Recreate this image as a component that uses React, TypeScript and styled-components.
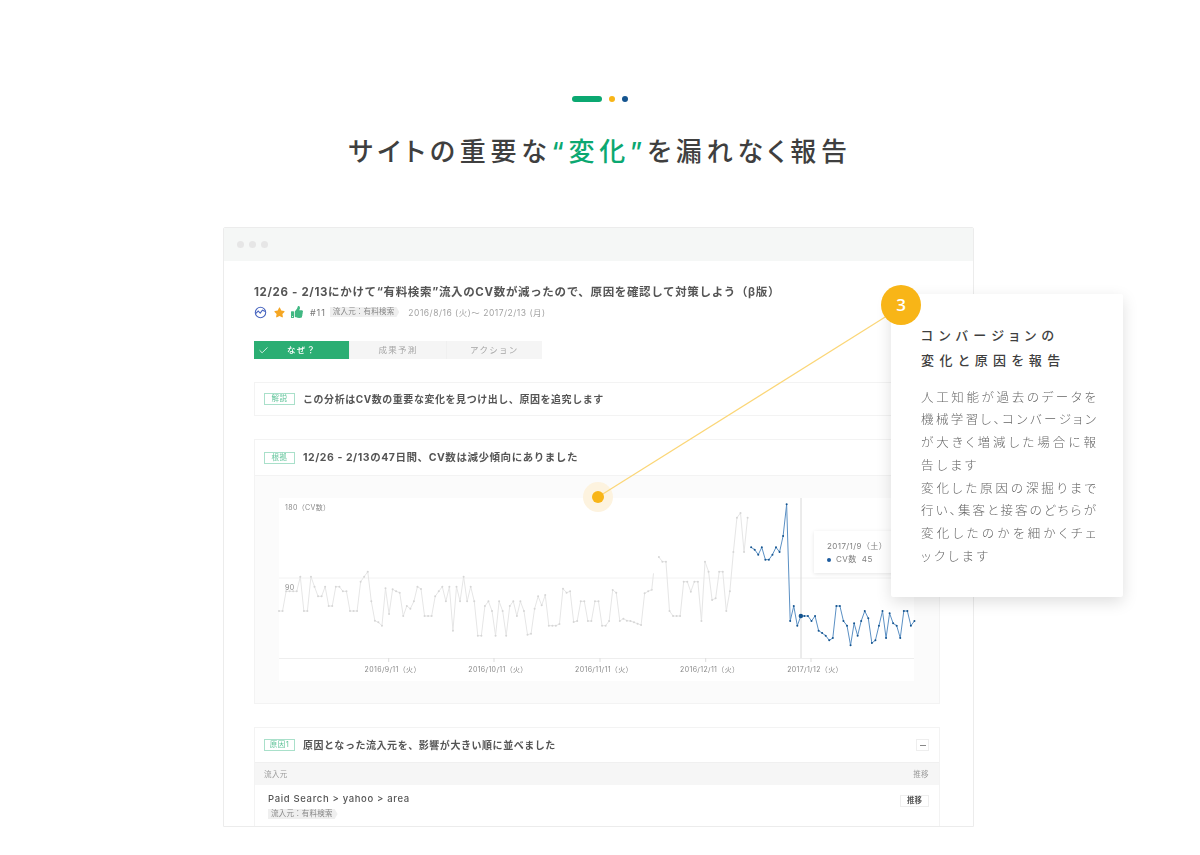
import React from 'react'
import styled, { createGlobalStyle } from 'styled-components'
import { FaStar, FaThumbsUp } from 'react-icons/fa'
import { Check } from 'lucide-react'

const GlobalStyle = createGlobalStyle`
  html, body { margin: 0; padding: 0; background: #fff; }
  body {
    font-family: Inter, "Noto Sans CJK JP", "Noto Sans", sans-serif;
    color: #444;
  }
`

const Stage = styled.div`
  position: relative;
  width: 1200px;
  height: 855px;
  padding-top: 96px;
  box-sizing: border-box;
  overflow: hidden;
`
const Marks = styled.div`
  display: flex;
  justify-content: center;
  align-items: center;
  gap: 7px;
  height: 6px;
`
const Dash = styled.span`
  width: 30px;
  height: 6px;
  border-radius: 3px;
  background: #0ba871;
`
const Dot = styled.span<{ $color: string }>`
  width: 6px;
  height: 6px;
  border-radius: 50%;
  background: ${(p) => p.$color};
`
const Title = styled.h1`
  margin: 31px 0 0;
  font-size: 26px;
  line-height: 38px;
  font-weight: 500;
  font-feature-settings: "palt";
  letter-spacing: 4.75px;
  text-align: center;
  color: #3f3f3f;
  em { font-style: normal; color: #0ba871; }
`
const Window = styled.div`
  box-sizing: border-box;
  width: 751px;
  height: 600px;
  margin: 56px 0 0 223px;
  border: 1px solid #ececec;
  border-radius: 2px 2px 0 0;
  overflow: hidden;
  background: #fff;
  filter: blur(0.25px);
`
const WindowBar = styled.div`
  display: flex;
  align-items: center;
  gap: 5px;
  height: 33px;
  padding-left: 13px;
  background: #f5f7f6;
`
const WindowDot = styled.span`
  width: 7px;
  height: 7px;
  border-radius: 50%;
  background: #e6e6e6;
`
const Content = styled.div`
  width: 686px;
  margin-left: 30px;
`
const Heading = styled.h2`
  margin: 23px 0 0;
  font-size: 11.5px;
  line-height: 16px;
  font-weight: 700;
  letter-spacing: 0.65px;
  color: #555;
  white-space: nowrap;
`
const Meta = styled.div`
  display: flex;
  align-items: center;
  height: 12px;
  margin-top: 6px;
  white-space: nowrap;
`
const MetaIcon = styled.span<{ $color: string; $width: number }>`
  display: flex;
  width: ${(p) => p.$width}px;
  color: ${(p) => p.$color};
`
const IssueNo = styled.span`
  margin: 0 4px 0 7px;
  font-size: 9px;
  letter-spacing: 0.9px;
  color: #777;
`
const SourceTag = styled.span`
  display: block;
  width: fit-content;
  height: 10px;
  padding: 0 5px 0 3px;
  font-size: 7.5px;
  line-height: 10px;
  letter-spacing: 0.2px;
  color: #888;
  background: #efefef;
  clip-path: polygon(0 0, calc(100% - 3px) 0, 100% 50%, calc(100% - 3px) 100%, 0 100%);
  white-space: nowrap;
`
const Period = styled.span`
  margin-left: 9px;
  font-size: 8.5px;
  letter-spacing: 0.5px;
  color: #a3a3a3;
`
const Tabs = styled.div`
  display: flex;
  margin-top: 23px;
  width: 288px;
`
const Tab = styled.div<{ $active?: boolean }>`
  position: relative;
  flex: 1;
  height: 18px;
  font-size: 8.5px;
  line-height: 18px;
  font-weight: ${(p) => (p.$active ? 500 : 400)};
  letter-spacing: 1.3px;
  text-align: center;
  color: ${(p) => (p.$active ? '#fff' : '#a5a5a5')};
  background: ${(p) => (p.$active ? '#2bae73' : '#f5f5f5')};
  & + & { border-left: 1px solid #f0f0f0; }
  svg { position: absolute; left: 4px; top: 3.5px; }
`
const Panel = styled.section`
  box-sizing: border-box;
  margin-top: 23px;
  border: 1px solid #f3f3f3;
`
const PanelHead = styled.div<{ $height: number }>`
  box-sizing: border-box;
  display: flex;
  align-items: center;
  height: ${(p) => p.$height}px;
  padding: 0 9px;
`
const Label = styled.span`
  box-sizing: border-box;
  width: 31px;
  height: 12px;
  margin-right: 8px;
  border: 1px solid #a9e0ca;
  font-size: 7.5px;
  line-height: 10px;
  letter-spacing: 0.4px;
  text-align: center;
  color: #64c59c;
`
const PanelTitle = styled.span<{ $size?: number }>`
  margin-top: -2px;
  font-size: ${(p) => p.$size || 10}px;
  font-weight: 700;
  letter-spacing: 0.55px;
  color: #555;
  white-space: nowrap;
`
const MinusButton = styled.span`
  box-sizing: border-box;
  display: flex;
  align-items: center;
  justify-content: center;
  width: 13px;
  height: 12px;
  margin: 0 1px 0 auto;
  border: 1px solid #eee;
  &::before { content: ''; width: 6px; height: 1px; background: #888; }
`
const ChartArea = styled.div`
  padding: 22px 25px 22px 24px;
  border-top: 1px solid #f3f3f3;
  background: #fbfbfb;
`
const ChartBox = styled.div`
  position: relative;
  width: 635px;
  height: 183px;
  background: #fff;
  svg { display: block; overflow: visible; }
  text {
    font-family: Inter, "Noto Sans CJK JP", sans-serif;
    font-size: 7px;
    letter-spacing: 0.35px;
    fill: #888;
  }
`
const Tooltip = styled.div`
  position: absolute;
  left: 535px;
  top: 33px;
  width: 100px;
  height: 42px;
  padding: 9px 0 0 13px;
  box-sizing: border-box;
  background: #fff;
  box-shadow: 0 1px 4px rgba(0, 0, 0, 0.1);
  font-size: 8px;
  line-height: 13px;
  letter-spacing: 0.4px;
  color: #808080;
  white-space: nowrap;
`
const TooltipValue = styled.div`
  display: flex;
  align-items: center;
  gap: 5px;
  &::before {
    content: '';
    width: 4px;
    height: 4px;
    border-radius: 50%;
    background: #1d5c9f;
  }
`
const TableHead = styled.div`
  box-sizing: border-box;
  display: flex;
  justify-content: space-between;
  align-items: center;
  height: 23px;
  padding: 0 10px 2px 9px;
  font-size: 7.5px;
  letter-spacing: 0.4px;
  color: #999;
  background: #f6f6f6;
  border-top: 1px solid #f0f0f0;
`
const TableRow = styled.div`
  display: flex;
  justify-content: space-between;
  padding: 8px 10px 30px 13px;
`
const RowName = styled.div`
  font-size: 9.5px;
  line-height: 12px;
  letter-spacing: 0.65px;
  font-weight: 500;
  color: #555;
  margin-bottom: 4px;
`
const TrendButton = styled.span`
  box-sizing: border-box;
  width: 29px;
  height: 12px;
  margin-top: 2px;
  border: 1px solid #eee;
  font-size: 7.5px;
  line-height: 10px;
  font-weight: 700;
  text-align: center;
  color: #555;
`
const Connector = styled.svg`
  position: absolute;
  left: 0;
  top: 0;
  pointer-events: none;
`
const Callout = styled.aside`
  position: absolute;
  left: 891px;
  top: 294px;
  box-sizing: border-box;
  width: 232px;
  height: 303px;
  padding: 29px 0 0 30px;
  border-radius: 2px;
  background: #fff;
  box-shadow: 0 5px 16px rgba(0, 0, 0, 0.13);
  font-feature-settings: "palt";
`
const CalloutTitle = styled.h3`
  margin: 0;
  font-size: 13px;
  line-height: 24.5px;
  font-weight: 500;
  letter-spacing: 5.4px;
  color: #3f3f3f;
  white-space: nowrap;
`
const CalloutBody = styled.div`
  margin-top: 14.5px;
  font-size: 12.5px;
  line-height: 22.75px;
  font-weight: 300;
  color: #666;
  white-space: nowrap;
  filter: blur(0.2px);
`
const BodyLine = styled.span<{ $short?: boolean }>`
  display: block;
  width: 177px;
  letter-spacing: ${(p) => (p.$short ? 3.1 : 2)}px;
  white-space: normal;
  text-align: justify;
  text-align-last: ${(p) => (p.$short ? 'left' : 'justify')};
`
const Badge = styled.div`
  position: absolute;
  left: 881px;
  top: 285px;
  width: 40px;
  height: 40px;
  border-radius: 50%;
  background: #f8b517;
  font-family: "Open Sans", sans-serif;
  font-size: 17px;
  font-weight: 600;
  line-height: 40px;
  text-align: center;
  color: #fff;
`

// y values read off the screenshot, x is one point per day
const toY = (z: number) => z / 3 - 18
const STEP = 3.55

const grayA = [
  393, 393, 334, 334, 334, 334, 290, 393, 393, 290, 320, 349, 349, 320, 378, 378, 320, 320, 334, 334,
  393, 393, 393, 305, 290, 275, 364, 422, 427, 437, 325, 402, 328, 334, 338, 408, 378, 386, 364, 320,
  327, 408, 408, 408, 349, 334, 320, 364, 320, 452, 320, 364, 290, 364, 320, 364, 467, 467, 378, 364,
  393, 467, 364, 393, 467, 378, 364, 408, 364, 393, 464, 461, 386, 349, 376, 345, 437, 437, 437, 432,
  326, 338, 334, 426, 423, 364, 364, 423, 423, 364, 364, 437, 437, 423, 330, 338, 423, 416, 422, 423,
  427, 431, 435, 340, 334, 329,
]
const grayB = [
  231, 245, 245, 393, 408, 408, 408, 305, 305, 335, 305, 305, 423, 245, 275, 360, 355, 275, 275, 393,
  334, 216, 113, 99, 216, 113,
]
const blue = [
  202, 209, 224, 202, 239, 239, 224, 202, 216, 168, 73, 423, 378, 437, 408, 408, 408, 423, 408, 452,
  459, 467, 481, 474, 378, 378, 423, 437, 496, 430, 467, 423, 393, 415, 489, 481, 437, 393, 474, 400,
  430, 437, 474, 393, 393, 437, 423,
]
const ticks = [
  { x: 109.7, label: '2016/9/11（火）' },
  { x: 215, label: '2016/10/11（火）' },
  { x: 321, label: '2016/11/11（火）' },
  { x: 426.7, label: '2016/12/11（火）' },
  { x: 532, label: '2017/1/12（火）' },
]

const Series = ({ start, values, line, dot }: any) => {
  const pts = values.map((v: number, i: number) => [(start + i) * STEP, toY(v)])
  return (
    <g>
      <polyline
        points={pts.map((p: number[]) => p.join(',')).join(' ')}
        fill="none"
        stroke={line}
        strokeWidth="1"
      />
      {pts.map((p: number[], i: number) => (
        <circle key={i} cx={p[0]} cy={p[1]} r="1" fill={dot} />
      ))}
    </g>
  )
}

const Chart = () => (
  <ChartBox>
    <svg width="635" height="183" viewBox="0 0 635 183">
      <line x1="0" y1="80" x2="635" y2="80" stroke="#f2f2f2" />
      <line x1="0" y1="160.5" x2="635" y2="160.5" stroke="#eeeeee" />
      {ticks.map((t) => (
        <g key={t.x}>
          <line x1={t.x} y1="160" x2={t.x} y2="164" stroke="#dddddd" />
          <text x={t.x + 4} y="173.5" textAnchor="middle">{t.label}</text>
        </g>
      ))}
      <text x="6" y="11.5">180（CV数）</text>
      <text x="6" y="91.5">90</text>
      <line x1="522" y1="0" x2="522" y2="160" stroke="#d8d8d8" />
      <Series start={0} values={grayA} line="#e6e6e6" dot="#d6d6d6" />
      <line x1={105 * STEP} y1={toY(329)} x2={105.5 * STEP} y2={toY(280)} stroke="#e6e6e6" />
      <Series start={107} values={grayB} line="#e6e6e6" dot="#d6d6d6" />
      <Series start={133} values={blue} line="#5b90c4" dot="#14548f" />
      <circle cx={147 * STEP} cy={toY(408)} r="2.2" fill="#14548f" />
    </svg>
    <Tooltip>
      2017/1/9（土）
      <TooltipValue>CV数&nbsp;&nbsp;45</TooltipValue>
    </Tooltip>
  </ChartBox>
)

const TrendIcon = () => (
  <svg width="13" height="13" viewBox="0 0 13 13" fill="none" stroke="#4a67c0" strokeWidth="1.1">
    <circle cx="6.5" cy="6.5" r="5.2" />
    <path d="M1.6 7.6 4.2 5l2 2.2 2.2-3 3 1.4" />
  </svg>
)

const App = () => (
  <Stage>
    <GlobalStyle />
    <Marks>
      <Dash />
      <Dot $color="#f8b517" />
      <Dot $color="#14548f" />
    </Marks>
    <Title>
      サイトの重要な<em>“変化”</em>を漏れなく報告
    </Title>
    <Window>
      <WindowBar>
        <WindowDot />
        <WindowDot />
        <WindowDot />
      </WindowBar>
      <Content>
        <Heading>12/26 - 2/13にかけて“有料検索”流入のCV数が減ったので、原因を確認して対策しよう（β版）</Heading>
        <Meta>
          <MetaIcon $color="#4a67c0" $width={20}><TrendIcon /></MetaIcon>
          <MetaIcon $color="#f5a623" $width={17}><FaStar size={11} /></MetaIcon>
          <MetaIcon $color="#41b883" $width={12}><FaThumbsUp size={12} /></MetaIcon>
          <IssueNo>#11</IssueNo>
          <SourceTag>流入元：有料検索</SourceTag>
          <Period>2016/8/16 (火)〜 2017/2/13 (月)</Period>
        </Meta>
        <Tabs>
          <Tab $active><Check size={11} strokeWidth={1.75} />なぜ？</Tab>
          <Tab>成果予測</Tab>
          <Tab>アクション</Tab>
        </Tabs>
        <Panel>
          <PanelHead $height={32}>
            <Label>解説</Label>
            <PanelTitle>この分析はCV数の重要な変化を見つけ出し、原因を追究します</PanelTitle>
          </PanelHead>
        </Panel>
        <Panel>
          <PanelHead $height={35}>
            <Label>根拠</Label>
            <PanelTitle $size={10.5}>12/26 - 2/13の47日間、CV数は減少傾向にありました</PanelTitle>
          </PanelHead>
          <ChartArea>
            <Chart />
          </ChartArea>
        </Panel>
        <Panel>
          <PanelHead $height={34}>
            <Label>原因1</Label>
            <PanelTitle>原因となった流入元を、影響が大きい順に並べました</PanelTitle>
            <MinusButton />
          </PanelHead>
          <TableHead>
            <span>流入元</span>
            <span>推移</span>
          </TableHead>
          <TableRow>
            <div>
              <RowName>Paid Search &gt; yahoo &gt; area</RowName>
              <SourceTag>流入元：有料検索</SourceTag>
            </div>
            <TrendButton>推移</TrendButton>
          </TableRow>
        </Panel>
      </Content>
    </Window>
    <Connector width="1200" height="855" viewBox="0 0 1200 855">
      <circle cx="598" cy="497" r="15" fill="#fdf3df" />
      <line x1="598" y1="497" x2="890" y2="314" stroke="#fbd677" strokeWidth="1.2" />
      <circle cx="598" cy="497" r="6" fill="#f8b517" />
    </Connector>
    <Callout>
      <CalloutTitle>
        コンバージョンの<br />変化と原因を報告
      </CalloutTitle>
      <CalloutBody>
        <BodyLine>人工知能が過去のデータを</BodyLine>
        <BodyLine>機械学習し、コンバージョン</BodyLine>
        <BodyLine>が大きく増減した場合に報</BodyLine>
        <BodyLine $short>告します</BodyLine>
        <BodyLine>変化した原因の深掘りまで</BodyLine>
        <BodyLine>行い、集客と接客のどちらが</BodyLine>
        <BodyLine>変化したのかを細かくチェ</BodyLine>
        <BodyLine $short>ックします</BodyLine>
      </CalloutBody>
    </Callout>
    <Badge>3</Badge>
  </Stage>
)

export default App
